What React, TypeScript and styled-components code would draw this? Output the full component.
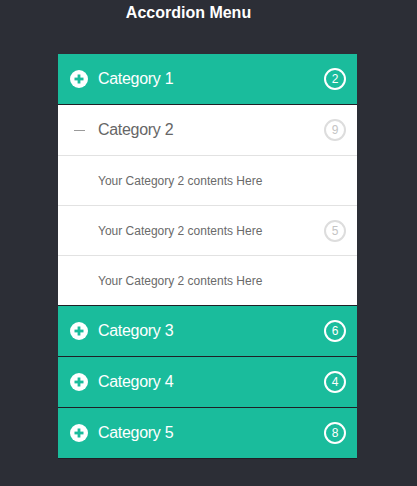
import styled, { createGlobalStyle } from "styled-components";

type Category = {
  name: string;
  count: number;
  open?: boolean;
  items?: { text: string; count?: number }[];
};

const categories: Category[] = [
  { name: "Category 1", count: 2 },
  {
    name: "Category 2",
    count: 9,
    open: true,
    items: [
      { text: "Your Category 2 contents Here" },
      { text: "Your Category 2 contents Here", count: 5 },
      { text: "Your Category 2 contents Here" },
    ],
  },
  { name: "Category 3", count: 6 },
  { name: "Category 4", count: 4 },
  { name: "Category 5", count: 8 },
];

export default function App() {
  return (
    <>
      <GlobalStyle />
      <Page>
        <Title>Accordion Menu</Title>
        <Menu>
          {categories.map((cat) => (
            <Section key={cat.name}>
              <Header open={!!cat.open}>
                {cat.open ? <Minus /> : <PlusIcon />}
                <Label open={!!cat.open}>{cat.name}</Label>
                <Badge light={!!cat.open}>{cat.count}</Badge>
              </Header>
              {cat.open &&
                cat.items?.map((item, i) => (
                  <Item key={i} last={i === (cat.items?.length ?? 0) - 1}>
                    <ItemText>{item.text}</ItemText>
                    {item.count !== undefined && (
                      <Badge light>{item.count}</Badge>
                    )}
                  </Item>
                ))}
            </Section>
          ))}
        </Menu>
      </Page>
    </>
  );
}

function PlusIcon() {
  return (
    <IconBox>
      <svg width="18" height="18" viewBox="0 0 18 18">
        <circle cx="9" cy="9" r="9" fill="#ffffff" />
        <rect x="4.5" y="7.6" width="9" height="2.8" fill="#1abc9c" />
        <rect x="7.6" y="4.5" width="2.8" height="9" fill="#1abc9c" />
      </svg>
    </IconBox>
  );
}

const GlobalStyle = createGlobalStyle`
  html, body {
    margin: 0;
    padding: 0;
    background: #2c2e36;
  }
  body {
    font-family: "Liberation Sans", Arial, sans-serif;
  }
`;

const Page = styled.div`
  min-height: 486px;
  background: #2c2e36;
  display: flex;
  flex-direction: column;
  align-items: center;
  padding-right: 2px;
`;

const Title = styled.h1`
  margin: 0;
  padding: 2px 38px 0 0;
  width: 100%;
  box-sizing: border-box;
  text-align: center;
  font-size: 16px;
  line-height: 21px;
  font-weight: 700;
  color: #ffffff;
  height: 54px;
`;

const Menu = styled.div`
  width: 299px;
  display: flex;
  flex-direction: column;
`;

const Section = styled.div`
  display: flex;
  flex-direction: column;
`;

const Header = styled.div<{ open: boolean }>`
  display: flex;
  align-items: center;
  height: 50px;
  padding: 0 11px 0 12px;
  background: ${(p) => (p.open ? "#ffffff" : "#1abc9c")};
  border-bottom: 1px solid ${(p) => (p.open ? "#e2e2e2" : "#1f2026")};
`;

const IconBox = styled.span`
  width: 18px;
  height: 18px;
  display: flex;
  margin-right: 10px;
`;

const Minus = styled.span`
  width: 18px;
  height: 18px;
  margin-right: 10px;
  display: flex;
  align-items: center;
  justify-content: center;
  &::before {
    content: "";
    width: 11px;
    height: 1px;
    background: #9a9a9a;
  }
`;

const Label = styled.span<{ open: boolean }>`
  flex: 1;
  font-size: 16px;
  letter-spacing: -0.3px;
  color: ${(p) => (p.open ? "#666666" : "#ffffff")};
`;

const Badge = styled.span<{ light: boolean }>`
  width: 22px;
  height: 22px;
  box-sizing: border-box;
  border-radius: 50%;
  border: 2px solid ${(p) => (p.light ? "#dddddd" : "#ffffff")};
  color: ${(p) => (p.light ? "#c4c4c4" : "#ffffff")};
  display: flex;
  align-items: center;
  justify-content: center;
  font-size: 12px;
  line-height: 1;
`;

const Item = styled.div<{ last: boolean }>`
  display: flex;
  align-items: center;
  height: 49px;
  padding: 0 11px 0 40px;
  background: #ffffff;
  border-bottom: 1px solid ${(p) => (p.last ? "#1f2026" : "#e2e2e2")};
`;

const ItemText = styled.span`
  flex: 1;
  font-size: 12px;
  color: #6a6a6a;
`;
